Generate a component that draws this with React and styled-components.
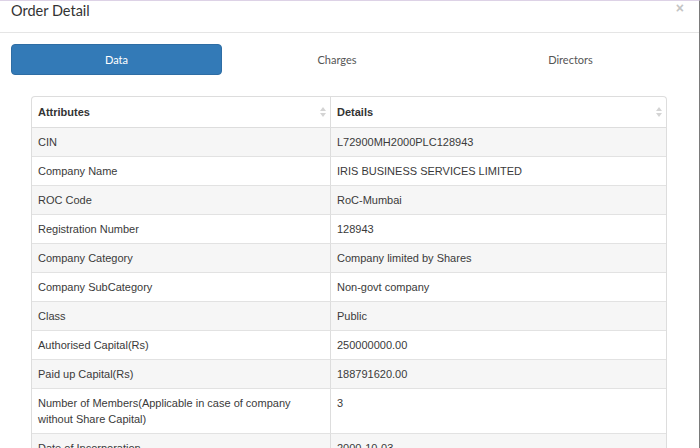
import React from 'react'
import styled, { createGlobalStyle } from 'styled-components'

const GlobalStyle = createGlobalStyle`
  html, body {
    margin: 0;
    padding: 0;
    background: #fff;
    overflow: hidden;
  }
  * { box-sizing: border-box; }
`

const rows = [
  ['CIN', 'L72900MH2000PLC128943'],
  ['Company Name', 'IRIS BUSINESS SERVICES LIMITED'],
  ['ROC Code', 'RoC-Mumbai'],
  ['Registration Number', '128943'],
  ['Company Category', 'Company limited by Shares'],
  ['Company SubCategory', 'Non-govt company'],
  ['Class', 'Public'],
  ['Authorised Capital(Rs)', '250000000.00'],
  ['Paid up Capital(Rs)', '188791620.00'],
  ['Number of Members(Applicable in case of company without Share Capital)', '3'],
  ['Date of Incorporation', '2000-10-03'],
]

function SortIcon() {
  return (
    <SortSvg viewBox="0 0 6 10" width="6" height="10">
      <path d="M3 0 L6 4 L0 4 Z" fill="#d4d4d4" />
      <path d="M3 10 L6 6 L0 6 Z" fill="#d4d4d4" />
    </SortSvg>
  )
}

function App() {
  const [tab, setTab] = React.useState('Data')

  return (
    <>
      <GlobalStyle />
      <Modal>
        <Header>
          <Title>Order Detail</Title>
          <Close>×</Close>
        </Header>
        <Body>
          <Tabs>
            {['Data', 'Charges', 'Directors'].map(t => (
              <Tab key={t} active={t === tab} onClick={() => setTab(t)}>{t}</Tab>
            ))}
          </Tabs>
          <TableWrap>
            <Table>
              <colgroup>
                <col style={{ width: 298 }} />
                <col />
              </colgroup>
              <thead>
                <tr>
                  <Th>Attributes<SortIcon /></Th>
                  <Th>Details<SortIcon /></Th>
                </tr>
              </thead>
              <tbody>
                {rows.map(([a, d], i) => (
                  <Row key={a} striped={i % 2 === 0}>
                    <Td>{a}</Td>
                    <Td>{d}</Td>
                  </Row>
                ))}
              </tbody>
            </Table>
          </TableWrap>
        </Body>
      </Modal>
    </>
  )
}

export default App

const Modal = styled.div`
  width: 700px;
  height: 448px;
  background: #fff;
  border-top: 1px solid #ddd2e6;
  border-right: 1px solid #7a7a7a;
  overflow: hidden;
`

const Header = styled.div`
  height: 32px;
  display: flex;
  align-items: flex-start;
  justify-content: space-between;
  padding: 0 11px 0 11px;
  border-bottom: 1px solid #e5e5e5;
`

const Title = styled.h4`
  margin: 0;
  font-family: Lato, 'Open Sans', sans-serif;
  font-weight: 400;
  font-size: 14.5px;
  line-height: 19px;
  color: #333;
`

const Close = styled.button`
  border: none;
  background: none;
  padding: 0;
  margin: 0 4px 0 0;
  font-family: 'Liberation Sans', Arial, sans-serif;
  font-size: 14px;
  font-weight: 700;
  line-height: 14px;
  color: #c4c4c4;
  cursor: pointer;
`

const Body = styled.div`
  padding: 11px 10px 0 11px;
`

const Tabs = styled.div`
  display: grid;
  grid-template-columns: 211px 230px 1fr;
  height: 31px;
`

const Tab = styled.div`
  display: flex;
  align-items: center;
  justify-content: center;
  border-radius: 4px;
  font-family: Lato, 'Open Sans', sans-serif;
  font-size: 11px;
  color: ${p => (p.active ? '#fff' : '#555')};
  background: ${p => (p.active ? '#337ab7' : 'transparent')};
  border: 1px solid ${p => (p.active ? '#2e6da4' : 'transparent')};
  cursor: pointer;
`

const TableWrap = styled.div`
  margin: 21px 0 0 20px;
  width: 636px;
  border: 1px solid #ddd;
  border-bottom: none;
  border-radius: 4px 4px 0 0;
  overflow: hidden;
`

const Table = styled.table`
  width: 100%;
  border-collapse: separate;
  border-spacing: 0;
  table-layout: fixed;
  font-family: 'Liberation Sans', Arial, sans-serif;
  font-size: 11px;
  color: #3a3a3a;
`

const Th = styled.th`
  position: relative;
  text-align: left;
  font-weight: 700;
  padding: 6px 8px 6px 6px;
  line-height: 18px;
  border-bottom: 1px solid #ddd;
  color: #333;
  & + & {
    border-left: 1px solid #ddd;
  }
`

const SortSvg = styled.svg`
  position: absolute;
  right: 4px;
  top: 10px;
`

const Row = styled.tr`
  background: ${p => (p.striped ? '#f6f6f6' : '#fff')};
`

const Td = styled.td`
  padding: 6px 8px 6px 6px;
  line-height: 16px;
  vertical-align: top;
  border-bottom: 1px solid #e2e2e2;
  & + & {
    border-left: 1px solid #ddd;
  }
`
